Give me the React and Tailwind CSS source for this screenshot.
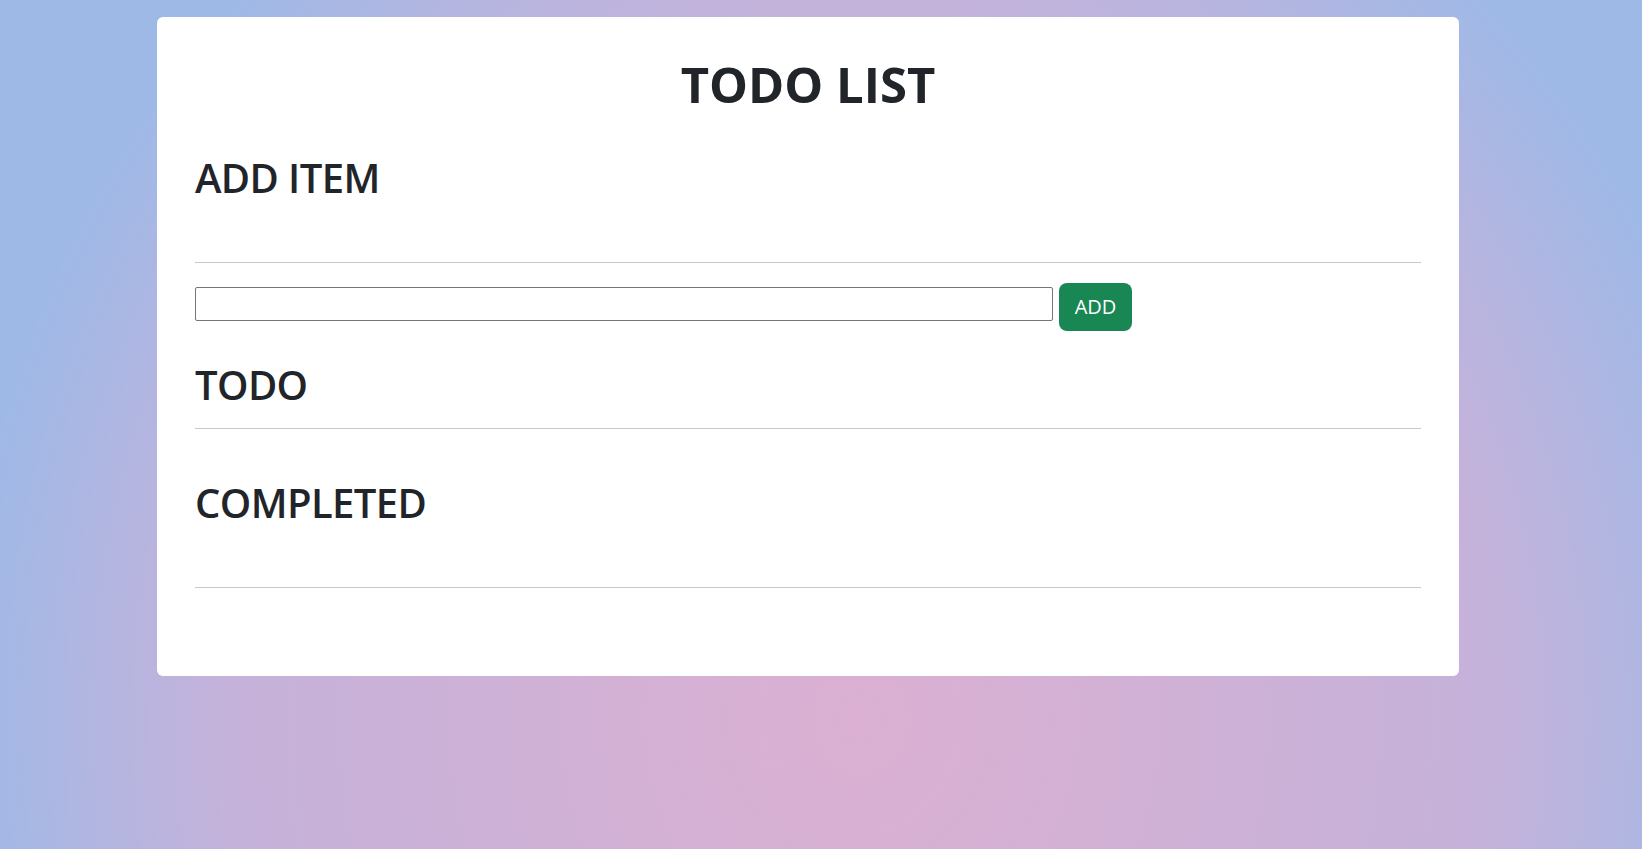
import React, { useState } from 'react';

const Divider = () => <div className="h-px w-full bg-[#c8c9ca]" />;

export default function App() {
  const [item, setItem] = useState('');
  const [todos, setTodos] = useState([]);
  const [done, setDone] = useState([]);

  const addItem = () => {
    if (!item.trim()) return;
    setTodos([...todos, item.trim()]);
    setItem('');
  };

  return (
    <div className="min-h-screen w-full bg-[radial-gradient(900px_1000px_at_860px_720px,#dbb0d2_0%,#c5b2da_70%,#9fb9e7_100%)] pt-[17px] pb-10 font-['Open_Sans','Noto_Sans',sans-serif] text-[#212529]">
      <div className="ml-[157px] w-[1302px] rounded-[6px] bg-white px-[38px] pt-[37px] pb-[88px]">
        <h1 className="text-center text-[49px] leading-[60px] font-bold">TODO LIST</h1>

        <h2 className="mt-[40px] text-[40px] leading-[48px] font-semibold tracking-[-0.6px]">ADD ITEM</h2>
        <ul className="mt-[60px]" />
        <Divider />

        <div className="mt-[20px] flex items-start gap-[6px]">
          <input
            type="text"
            value={item}
            onChange={(e) => setItem(e.target.value)}
            className="mt-[4px] h-[34px] w-[858px] rounded-[2px] border border-[#767676] bg-white px-2 text-base outline-none"
          />
          <button
            onClick={addItem}
            className="h-[48px] w-[73px] rounded-[8px] bg-[#198754] text-[20px] leading-[30px] text-white"
          >
            ADD
          </button>
        </div>

        <h2 className="mt-[30px] text-[40px] leading-[48px] font-semibold tracking-[-0.6px]">TODO</h2>
        <ul className="mt-[19px]">
          {todos.map((t, i) => (
            <li key={i}>{t}</li>
          ))}
        </ul>
        <Divider />

        <h2 className="mt-[50px] text-[40px] leading-[48px] font-semibold tracking-[-0.6px]">COMPLETED</h2>
        <ul className="mt-[60px]">
          {done.map((t, i) => (
            <li key={i}>{t}</li>
          ))}
        </ul>
        <Divider />
      </div>
    </div>
  );
}
